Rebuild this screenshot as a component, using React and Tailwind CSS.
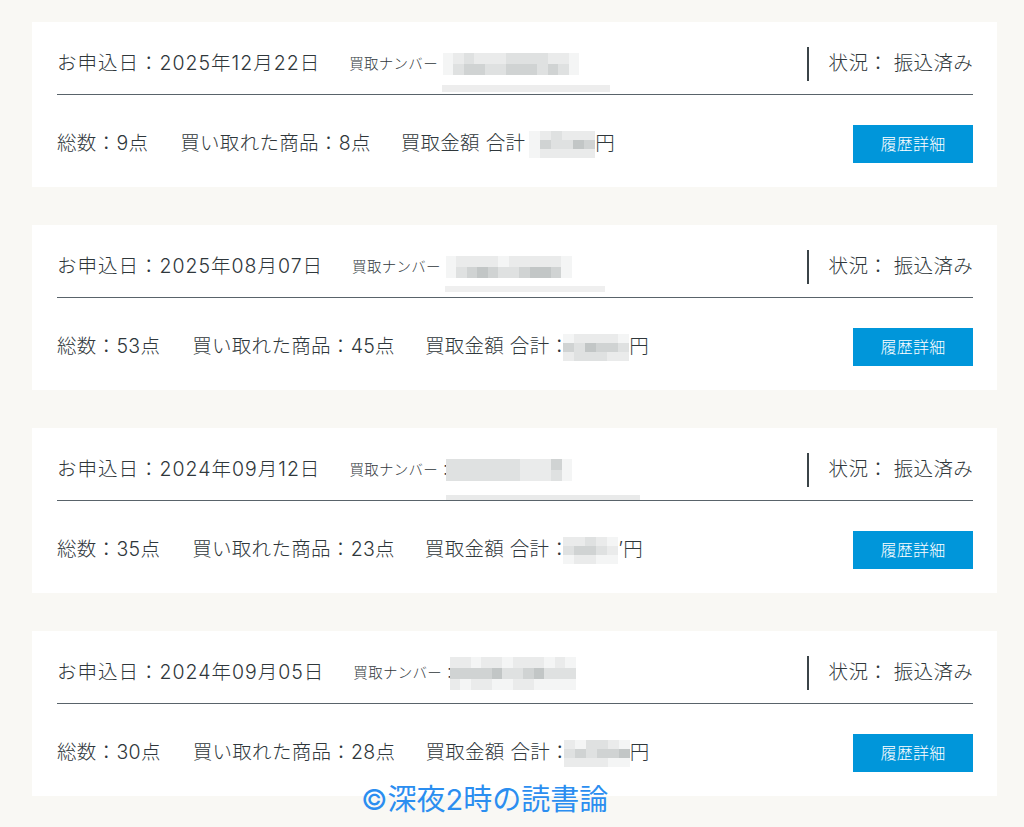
import React from "react";

// mosaic shades, written out in full so Tailwind picks them up
const shades = {
    0: "bg-white",
    1: "bg-[#f4f5f5]",
    2: "bg-[#eaebeb]",
    3: "bg-[#dfe1e1]",
    4: "bg-[#d0d3d3]",
    5: "bg-[#c2c6c6]",
};

const orders = [
    {
        date: "2025年12月22日",
        colon: false,
        number: [
            [1, 2, 3, 2, 2, 2, 3, 3, 3, 3, 2, 2, 1],
            [1, 3, 4, 4, 3, 3, 4, 4, 4, 3, 4, 3, 1],
        ],
        strip: "w-[168px] -left-[1px] top-[32px] h-[7px] bg-[#ededed]",
        total: 9,
        bought: 8,
        amountColon: false,
        amount: [
            [1, 2, 3, 2, 2, 2],
            [1, 4, 3, 3, 5, 4],
            [1, 2, 2, 2, 2, 2],
        ],
        tail: "",
    },
    {
        date: "2025年08月07日",
        colon: false,
        number: [
            [1, 2, 2, 2, 2, 1, 2, 2, 2, 2, 2, 1],
            [1, 3, 4, 5, 4, 3, 3, 4, 5, 5, 4, 1],
        ],
        strip: "w-[160px] -left-[1px] top-[30px] h-[6px] bg-[#efefef]",
        total: 53,
        bought: 45,
        amountColon: true,
        amount: [
            [1, 2, 2, 2, 2, 1],
            [4, 3, 5, 4, 4, 3],
            [2, 3, 3, 3, 2, 2],
        ],
        tail: "",
    },
    {
        date: "2024年09月12日",
        colon: true,
        number: [
            [3, 3, 3, 3, 3, 3, 3, 2, 2, 2, 4, 1],
            [3, 3, 3, 3, 3, 3, 3, 2, 2, 2, 3, 1],
        ],
        strip: "w-[194px] left-0 top-[36px] h-[5px] bg-[#e9eaea]",
        total: 35,
        bought: 23,
        amountColon: true,
        amount: [
            [2, 2, 3, 2, 1],
            [3, 4, 4, 3, 2],
            [1, 2, 2, 1, 1],
        ],
        tail: "’",
    },
    {
        date: "2024年09月05日",
        colon: true,
        number: [
            [2, 2, 1, 2, 2, 1, 2, 2, 2, 1, 2, 1],
            [4, 4, 4, 4, 5, 3, 3, 4, 5, 3, 3, 3],
            [2, 1, 2, 2, 1, 1, 2, 2, 1, 1, 1, 1],
        ],
        strip: "hidden",
        total: 30,
        bought: 28,
        amountColon: true,
        amount: [
            [2, 1, 3, 3, 2, 1],
            [3, 4, 3, 4, 4, 5],
            [2, 2, 2, 2, 1, 1],
        ],
        tail: "",
    },
];

function Mosaic({ rows, cell, rowH }) {
    return (
        <div className="flex flex-col">
            {rows.map((row, i) => (
                <div key={i} className="flex">
                    {row.map((s, j) => (
                        <div key={j} className={`${shades[s]} ${cell} ${rowH}`} />
                    ))}
                </div>
            ))}
        </div>
    );
}

function OrderCard({ order }) {
    return (
        <div className="bg-white pl-[25px] pr-[24px] h-[165px] flex flex-col">
            {/* header: date, number, status */}
            <div className="flex items-center pt-[25px] pb-[13px] border-b-[1.5px] border-[#59636a]">
                <span className="text-[19.5px] leading-none tracking-[1px]">お申込日：{order.date}</span>
                <span className="ml-[29px] text-[14.5px] leading-none">
                    買取ナンバー{order.colon ? "：" : ""}
                </span>
                <div className={`relative ${order.colon ? "-ml-[7px]" : "ml-[5px]"}`}>
                    <Mosaic rows={order.number} cell="w-[10.5px]" rowH="h-[11px]" />
                    <div className={`absolute ${order.strip}`} />
                </div>
                <div className="ml-auto flex items-center">
                    <div className="w-[1.5px] h-[34px] bg-[#3b4448]" />
                    <span className="ml-[20px] text-[19.5px] leading-none">状況： 振込済み</span>
                </div>
            </div>

            {/* summary row */}
            <div className="flex items-center flex-1 pt-[6px]">
                <span className="text-[19.5px]">総数：{order.total}点</span>
                <span className="ml-[32px] text-[19.5px]">買い取れた商品：{order.bought}点</span>
                <span className="ml-[30px] text-[19.5px]">
                    買取金額 合計{order.amountColon ? "：" : " "}
                </span>
                <div className={order.amountColon ? "-ml-[6px]" : "ml-[4px]"}>
                    <Mosaic rows={order.amount} cell="w-[11px]" rowH="h-[9px]" />
                </div>
                <span className="text-[19.5px]">{order.tail}円</span>
                <button className="ml-auto w-[120px] h-[38px] bg-[#0096da] text-white text-[16px] font-light">
                    履歴詳細
                </button>
            </div>
        </div>
    );
}

export default function App() {
    return (
        <div
            className="relative min-h-[827px] bg-[#f9f8f4] pt-[22px] text-[#2f373b] font-light tracking-[0.3px]"
            style={{ fontFamily: 'Inter, "Noto Sans CJK JP", "Noto Sans", sans-serif' }}
        >
            <div className="ml-[32px] w-[965px] flex flex-col gap-[38px]">
                {orders.map((o, i) => (
                    <OrderCard key={i} order={o} />
                ))}
            </div>

            {/* watermark */}
            <div className="absolute left-[361px] top-[785px] text-[29px] font-normal text-[#2b8ef0] leading-none tracking-normal">
                ©深夜2時の読書論
            </div>
        </div>
    );
}
